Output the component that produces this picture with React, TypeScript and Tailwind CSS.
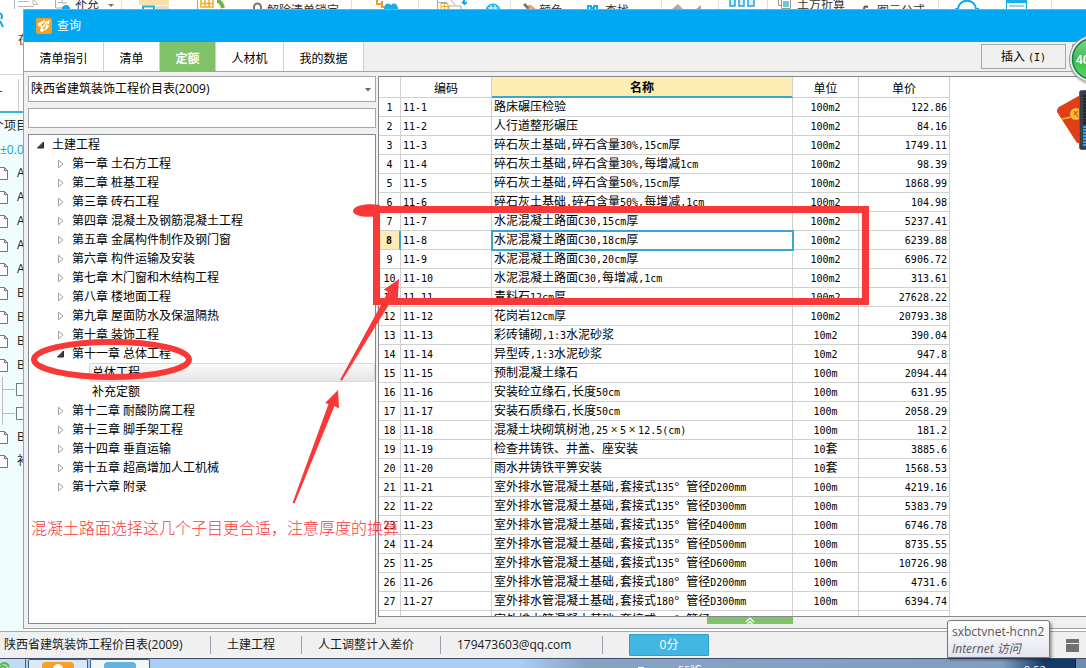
import React, { useState } from "react";

const cjk = "font-['Open_Sans','Noto_Sans_CJK_SC',sans-serif]";

const chapters = [
  "第一章 土石方工程",
  "第二章 桩基工程",
  "第三章 砖石工程",
  "第四章 混凝土及钢筋混凝土工程",
  "第五章 金属构件制作及钢门窗",
  "第六章 构件运输及安装",
  "第七章 木门窗和木结构工程",
  "第八章 楼地面工程",
  "第九章 屋面防水及保温隔热",
  "第十章 装饰工程",
];
const laterChapters = [
  "第十二章 耐酸防腐工程",
  "第十三章 脚手架工程",
  "第十四章 垂直运输",
  "第十五章 超高增加人工机械",
  "第十六章 附录",
];

const rows: [string, string, string][] = [
  ["路床碾压检验", "100m2", "122.86"],
  ["人行道整形碾压", "100m2", "84.16"],
  ["碎石灰土基础,碎石含量30%,15cm厚", "100m2", "1749.11"],
  ["碎石灰土基础,碎石含量30%,每增减1cm", "100m2", "98.39"],
  ["碎石灰土基础,碎石含量50%,15cm厚", "100m2", "1868.99"],
  ["碎石灰土基础,碎石含量50%,每增减,1cm", "100m2", "104.98"],
  ["水泥混凝土路面C30,15cm厚", "100m2", "5237.41"],
  ["水泥混凝土路面C30,18cm厚", "100m2", "6239.88"],
  ["水泥混凝土路面C30,20cm厚", "100m2", "6906.72"],
  ["水泥混凝土路面C30,每增减,1cm", "100m2", "313.61"],
  ["青料石12cm厚", "100m2", "27628.22"],
  ["花岗岩12cm厚", "100m2", "20793.38"],
  ["彩砖铺砌,1:3水泥砂浆", "10m2", "390.04"],
  ["异型砖,1:3水泥砂浆", "10m2", "947.8"],
  ["预制混凝土缘石", "100m", "2094.44"],
  ["安装砼立缘石,长度50cm", "100m", "631.95"],
  ["安装石质缘石,长度50cm", "100m", "2058.29"],
  ["混凝土块砌筑树池,25×5×12.5(cm)", "100m", "181.2"],
  ["检查井铸铁、井盖、座安装", "10套", "3885.6"],
  ["雨水井铸铁平箅安装", "10套", "1568.53"],
  ["室外排水管混凝土基础,套接式135°管径D200mm", "100m", "4219.16"],
  ["室外排水管混凝土基础,套接式135°管径D300mm", "100m", "5383.79"],
  ["室外排水管混凝土基础,套接式135°管径D400mm", "100m", "6746.78"],
  ["室外排水管混凝土基础,套接式135°管径D500mm", "100m", "8735.55"],
  ["室外排水管混凝土基础,套接式135°管径D600mm", "100m", "10726.98"],
  ["室外排水管混凝土基础,套接式180°管径D200mm", "100m", "4731.6"],
  ["室外排水管混凝土基础,套接式180°管径D300mm", "100m", "6394.74"],
  ["室外排水管混凝土基础,套接式180°管径D400mm", "100m", "8019.55"],
];

/* Latin runs are set in a half-width face beside full-width Chinese glyphs. */
function Mixed({ text }: { text: string }) {
  const parts = text.split(/([\x20-\x7e]+|[×°])/).filter(Boolean);
  return (
    <>
      {parts.map((p, i) => {
        if (p === "×" || p === "°")
          return (
            <span key={i} className={p === "×" ? "inline-block w-3 text-center" : "inline-block w-3"}>
              {p}
            </span>
          );
        return /^[\x20-\x7e]/.test(p) ? (
          <span key={i} className="font-['DejaVu_Sans_Mono',monospace] text-[10px]">
            {p}
          </span>
        ) : (
          <span key={i}>{p}</span>
        );
      })}
    </>
  );
}

function Closed() {
  return (
    <svg width="8" height="10" viewBox="0 0 8 10" className="shrink-0">
      <path d="M1.5 1.2 L6 5 L1.5 8.8 Z" fill="#fff" stroke="#a0a0a0" />
    </svg>
  );
}
function Open() {
  return (
    <svg width="8" height="10" viewBox="0 0 8 10" className="shrink-0">
      <path d="M6.5 2 V8 H0.5 Z" fill="#404040" stroke="#262626" />
    </svg>
  );
}

function Node({ text, level, state, selected }: { text: string; level: 0 | 1 | 2; state?: "open" | "closed"; selected?: boolean }) {
  const pad = level === 0 ? "pl-2" : level === 1 ? "pl-7" : "pl-[60px]";
  return (
    <li className={`flex h-[19px] items-center ${pad}`}>
      {state === "open" && <Open />}
      {state === "closed" && <Closed />}
      <span
        className={
          selected
            ? "flex h-[19px] flex-1 items-center rounded-[2px] border border-[#d9d9d9] bg-linear-to-b from-[#fafafa] to-[#e5e5e5] pl-[2px]"
            : level === 2
              ? "pl-[3px]"
              : "pl-[7px]"
        }
      >
        {text}
      </span>
    </li>
  );
}

function FileIcon() {
  return (
    <svg width="8" height="13" viewBox="0 0 8 13" className="shrink-0">
      <path d="M0 0.5 H4.5 L7.5 3.5 V12.5 H0 M4.5 0.5 V3.5 H7.5" fill="#fff" stroke="#777" />
    </svg>
  );
}

function Ribbon() {
  const g = "flex h-[9px] shrink-0 items-start overflow-hidden border-r border-[#e0e0e0]";
  return (
    <div className="flex h-[9px] overflow-hidden text-[12px] leading-[12px] text-[#333]">
      <div className={`${g} w-[122px]`}>
        <svg width="24" height="24" className="ml-[14px] shrink-0">
          <path d="M0.5 0 V23.5 H23 M20 0 L23.5 4 M19 0 V4.5 H24 M4 1.5 H15 M4 6.5 H20" fill="none" stroke="#b5b5b5" />
        </svg>
        <svg width="16" height="9" className="ml-[17px] shrink-0">
          <path d="M0.5 0 V8 H9 M7 0 V3 H12 M3 2.5 H6" fill="none" stroke="#aaa" />
          <path d="M7 9 a4 4 0 0 1 8 0" fill="#18a8e0" />
        </svg>
        <span className="-mt-[2px] ml-1 w-[30px] shrink-0">补充</span>
        <svg width="8" height="9" className="ml-[2px] shrink-0">
          <path d="M1 4 H7 L4 7 Z" fill="#777" />
        </svg>
      </div>
      <div className={`${g} w-[230px]`}>
        <svg width="30" height="9" className="ml-[17px] shrink-0">
          <rect width="30" height="5" fill="#fbe0ae" />
          <path d="M4 9 V6.5 H15 V9" fill="#fff" stroke="#18b0e8" strokeWidth="2" />
          <rect x="17" y="6" width="13" height="3" fill="#ddd" />
        </svg>
        <svg width="30" height="9" className="ml-[28px] shrink-0">
          <path d="M4 0 V7 H16 V0 M4 3.5 H16 M8 0 V7 M12 0 V7" fill="none" stroke="#f0b020" strokeWidth="1.5" />
          <path d="M20 1 C23 1 25 4 26 8" fill="none" stroke="#70b840" strokeWidth="4" />
          <path d="M0.5 0 V9" stroke="#aaa" />
        </svg>
        <svg width="10" height="9" className="ml-[26px] shrink-0">
          <path d="M1 9 V7 a3 3 0 0 1 7 0 V9" fill="none" stroke="#777" strokeWidth="2" />
        </svg>
        <span className="mt-[5px] ml-1 shrink-0">解除清单锁定</span>
      </div>
      <div className={`${g} w-[67px]`}>
        <svg width="25" height="9" className="ml-6 shrink-0">
          <path d="M1 0 V4 H6 M6 1 V7 H10" fill="none" stroke="#f59a23" strokeWidth="2" />
          <path d="M8 9 C8 4 12 2 15 5 C18 2 22 4 22 9 Z" fill="#16b0e8" />
        </svg>
      </div>
      <div className={`${g} w-[92px]`}>
        <svg width="30" height="9" className="ml-[18px] shrink-0">
          <path d="M0.5 0 V9 M0 2.5 H10" stroke="#aaa" />
          <path d="M4 3.5 H11 V9 M4 9 V3 M4 6.5 H12 M7.500 3 V9" fill="none" stroke="#f0b020" />
          <path d="M12 9 V6 H24 V9 M14 0 L18 5" fill="none" stroke="#aaa" />
          <path d="M27 0 V3 M25 2 L27.500 4 L30 2" fill="none" stroke="#16a8e0" strokeWidth="2" />
        </svg>
        <svg width="16" height="9" className="ml-[18px] shrink-0">
          <circle cx="8" cy="11" r="7.500" fill="#20b4ea" />
          <path d="M3 8 H13 M6 5 V9 M10 5 V9" stroke="#fff" />
        </svg>
      </div>
      <div className={`${g} w-[151px]`}>
        <svg width="16" height="9" className="ml-3 shrink-0">
          <path d="M1 4 L6 9" stroke="#777" strokeWidth="3" />
          <path d="M4 5 H8 L13 9 H8 Z" fill="#f0a070" />
        </svg>
        <span className="mt-[5px] shrink-0">颜色</span>
        <svg width="11" height="9" className="ml-6 shrink-0">
          <path d="M1 9 V6 H4 V9 M7 9 V6 H10 V9 M4 8 H7" fill="none" stroke="#16b0e8" strokeWidth="2" />
        </svg>
        <span className="mt-[5px] ml-[7px] shrink-0">查找</span>
      </div>
      <div className={`${g} w-[57px]`}>
        <svg width="40" height="9" className="ml-2 shrink-0">
          <path d="M2 9 L8 4 L13 9 Z M26 9 L31 5 V9 Z" fill="#aaa" />
        </svg>
      </div>
      <div className={`${g} w-[49px]`}>
        <svg width="28" height="9" className="ml-[10px] shrink-0">
          <path d="M1 0 V6 H6 V0 M10 0 V6 H15 V0 M19 0 V6 H25 V0" fill="#d8f0f8" stroke="#20a8d8" strokeWidth="1.5" />
        </svg>
      </div>
      <div className={`${g} w-[171px]`}>
        <svg width="15" height="9" className="ml-[10px] shrink-0">
          <path d="M0.5 0 V5.500 H4 M3.500 0 V8.500 H12.500 V0" fill="none" stroke="#999" />
          <rect x="5" y="1" width="6" height="6" fill="#70c8d8" />
        </svg>
        <span className="ml-1 -mt-px shrink-0">土方折算</span>
        <svg width="6" height="9" className="ml-[18px] shrink-0">
          <path d="M1 9 C1 6 3 6 5 7" fill="none" stroke="#555" strokeWidth="2" />
        </svg>
        <span className="mt-[5px] ml-2 shrink-0">图元公式</span>
      </div>
      <div className={`${g} w-[113px]`}>
        <svg width="24" height="9" className="ml-[16px] shrink-0">
          <path d="M0 9 H3 M21 9 H24 M3 9 C4 -2 20 -2 21 9" fill="none" stroke="#16a8e0" strokeWidth="2" />
        </svg>
        <svg width="24" height="9" className="ml-[26px] shrink-0">
          <rect x="1" width="21" height="3" fill="#18b0e8" />
          <path d="M1.500 0 V9 M21.500 0 V9 M4 6 H19" stroke="#18b0e8" />
        </svg>
      </div>
    </div>
  );
}

function Navigator() {
  const items = ["A", "A", "A", "A", "A", "B", "B", "B", "B", "", "", "B", "补"];
  return (
    <div className="flex min-h-0 w-[124px] flex-1 flex-col overflow-hidden bg-[#f0fdff] text-[12px] text-[#222]">
      <div className="-ml-2 flex h-6 shrink-0 items-center pt-[2px]">个项目</div>
      <div className="flex h-6 shrink-0 items-center pt-[2px] text-[#20a0d0]">±0.00</div>
      <ul>
        {items.map((t, i) =>
          t === "" ? (
            <li key={i} className="ml-[2px] flex h-6 items-center border-l border-[#bbb]">
              <span className="h-px w-3 bg-[#bbb]" />
              <svg width="9" height="13" viewBox="0 0 9 13">
                <path d="M1.500 0.500 H9 M1.500 0 V12.500 H9" fill="none" stroke="#777" />
              </svg>
            </li>
          ) : (
            <li key={i} className="flex h-6 items-center gap-[9px]">
              <FileIcon />
              <span>{t}</span>
            </li>
          )
        )}
      </ul>
    </div>
  );
}

function Tabs({ tab, setTab }: { tab: number; setTab: (n: number) => void }) {
  const tabs = [
    ["清单指引", "w-20"],
    ["清单", "w-14"],
    ["定额", "w-14"],
    ["人材机", "w-[68px]"],
    ["我的数据", "w-20"],
  ];
  return (
    <div className="flex h-[30px] shrink-0 items-stretch border-b border-[#7cc566]">
      {tabs.map(([t, w], i) => (
        <button
          key={t}
          onClick={() => setTab(i)}
          className={`${w} border-r border-[#b5e6a4] pt-1 text-center ${i === tab ? "bg-[#80c269] font-bold text-white" : "bg-white"}`}
        >
          {t}
        </button>
      ))}
      <div className="ml-auto flex gap-[6px] pt-[2px]">
        <button className="h-[25px] w-[85px] border border-[#a6a6a6] bg-[#f0f0f0]">
          插入 <Mixed text="(I)" />
        </button>
        <button aria-label="关闭" className="h-[25px] w-[54px] border border-[#a6a6a6] bg-[#f0f0f0]" />
      </div>
    </div>
  );
}

function PriceTable() {
  const [sel, setSel] = useState(7);
  const line = "border-r border-b border-[#d0d0d0]";
  return (
    <table className="table-fixed border-separate border-spacing-0 text-[12px] leading-[17px]">
      <colgroup>
        <col className="w-[22px]" />
        <col className="w-[91px]" />
        <col className="w-[301px]" />
        <col className="w-[66px]" />
        <col className="w-[91px]" />
      </colgroup>
      <thead>
        <tr className="h-[21px]">
          <th className={`${line} p-0`} />
          <th className={`${line} p-0 pt-[2px] font-normal`}>编码</th>
          <th className="border-r border-b-2 border-r-[#d0d0d0] border-b-[#39a6d4] bg-[#ffecb5] p-0 pt-[2px] font-bold">名称</th>
          <th className={`${line} p-0 pt-[2px] font-normal`}>单位</th>
          <th className={`${line} p-0 pt-[2px] font-normal`}>单价</th>
        </tr>
      </thead>
      <tbody className="leading-4">
        {rows.map(([name, unit, price], i) => (
          <tr key={i} className="h-[19px]" onClick={() => setSel(i)}>
            <td
              className={
                i === sel
                  ? "border-r-2 border-b border-r-[#39a6d4] border-b-[#d0d0d0] bg-[#ffecb5] p-0 text-center font-bold"
                  : `${line} p-0 text-center`
              }
            >
              <Mixed text={String(i + 1)} />
            </td>
            <td className={`${line} p-0 pl-[2px]`}>
              <Mixed text={`11-${i + 1}`} />
            </td>
            <td
              className={
                i === sel
                  ? `${line} p-0 pl-[2px] whitespace-nowrap outline-2 -outline-offset-1 outline-[#39a6d4]`
                  : `${line} p-0 pl-[2px] whitespace-nowrap`
              }
            >
              <Mixed text={name} />
            </td>
            <td className={`${line} p-0 text-center`}>
              <Mixed text={unit} />
            </td>
            <td className={`${line} p-0 pr-[2px] text-right`}>
              <Mixed text={price} />
            </td>
          </tr>
        ))}
      </tbody>
    </table>
  );
}

function QueryDialog() {
  const [tab, setTab] = useState(2);
  return (
    <section className="absolute top-[9px] -right-[41px] bottom-[39px] left-[23px] flex flex-col border border-[#a0a0a0] bg-[#f0f0f0] text-[12px] text-black">
      <header className="flex h-8 shrink-0 items-center gap-[5px] bg-[#00a8f3] pl-3 text-white">
        <svg width="16" height="16" viewBox="0 0 16 16">
          <rect width="16" height="16" rx="2" fill="#f7a024" />
          <path d="M2 5.500 L8 2 L9.500 3 L5 7 L7 7.500 L10 3.500 L14 2 L13 6 L10 7 L13.500 7.500 L11 11 L6 14 L4 13 L5 9 L2 8 Z" fill="#fff" />
          <path d="M8 5.500 L6 8.500 M11 5 L7 11 M9.500 9 L7.500 12" stroke="#f7a024" strokeWidth="1" fill="none" />
        </svg>
        <h1>查询</h1>
      </header>
      <Tabs tab={tab} setTab={setTab} />
      <div className="flex min-h-0 flex-1 gap-[2px] p-1">
        <div className="flex w-[348px] shrink-0 flex-col gap-[6px]">
          <div className="relative flex h-[26px] shrink-0">
            <select aria-label="定额库" className="w-full appearance-none border border-[#a6a6a6] bg-white pl-[2px]">
              <option>陕西省建筑装饰工程价目表(2009)</option>
            </select>
            <svg width="6" height="4" className="pointer-events-none absolute top-3 right-[5px]">
              <path d="M0 0 H6 L3 3.500 Z" fill="#666" />
            </svg>
          </div>
          <input aria-label="搜索" className="h-5 shrink-0 border border-[#a6a6a6] bg-white px-1" />
          <div className="min-h-0 flex-1 overflow-hidden border border-[#828790] bg-white">
            <ul className="leading-[17px]">
              <Node text="土建工程" level={0} state="open" />
              {chapters.map((c) => (
                <Node key={c} text={c} level={1} state="closed" />
              ))}
              <Node text="第十一章 总体工程" level={1} state="open" />
              <Node text="总体工程" level={2} selected />
              <Node text="补充定额" level={2} />
              {laterChapters.map((c) => (
                <Node key={c} text={c} level={1} state="closed" />
              ))}
            </ul>
          </div>
        </div>
        <div className="flex min-w-0 flex-1 flex-col items-center">
          <div className="min-h-0 w-full flex-1 overflow-hidden border border-[#828790] bg-white">
            <PriceTable />
          </div>
          <button aria-label="展开" className="flex h-[7px] w-[86px] shrink-0 justify-center bg-[#80c269]">
            <svg width="12" height="7">
              <path d="M2 5 L6 1 L10 5 M3.500 7 L6 4.500 L8.500 7" fill="none" stroke="#fff" strokeWidth="1.200" />
            </svg>
          </button>
        </div>
      </div>
    </section>
  );
}

function StatusBar() {
  const item = "flex h-[18px] items-center border-r border-[#98a0b0]";
  return (
    <footer className="flex h-7 shrink-0 items-center border-t border-b border-t-[#a8a8a8] border-b-[#3d4b66] bg-[#f0f0f0] text-[12px] text-[#1a1a1a]">
      <span className={`${item} w-[211px] pl-1`}>陕西省建筑装饰工程价目表(2009)</span>
      <span className={`${item} w-[91px] pl-4`}>土建工程</span>
      <span className={`${item} w-[139px] pl-4`}>人工调整计入差价</span>
      <span className={`${item} w-[162px] pl-4`}>179473603@qq.com</span>
      <button className="ml-[26px] h-[22px] w-20 rounded-[1px] border border-[#2d9fcb] bg-[#43b5e3] text-white">0分</button>
      <svg width="13" height="13" className="mr-[7px] ml-auto">
        <path d="M0 0 H13 V4 H0 Z M0 5 H13 V13 H0 Z" fill="#707070" />
      </svg>
    </footer>
  );
}

function Taskbar() {
  return (
    <div className="flex h-[9px] shrink-0 overflow-hidden bg-linear-to-r from-[#a9cdf3] from-48% via-[#87a3c4] via-54% to-[#7f9dc0] text-[11px] text-white">
      <div className="w-[26px] shrink-0 border-r border-[#44607f] bg-[#c3daf2]">
        <svg width="14" height="9">
          <path d="M0 6 C3 3 7 3 9 8 M0 9 C3 6 5 7 6 9" fill="none" stroke="#58b838" strokeWidth="2" />
        </svg>
      </div>
      <div className="ml-[2px] flex w-[60px] shrink-0 items-end justify-center rounded-t-[2px] border-x border-t border-[#44607f] bg-[#dae8f7]">
        <svg width="32" height="6">
          <rect width="32" height="12" rx="4" fill="#f9a020" />
          <circle cx="16" cy="7" r="5" fill="#fff" />
        </svg>
      </div>
      <div className="ml-[2px] flex w-[60px] shrink-0 items-end justify-center rounded-t-[2px] border-x border-t border-[#44607f] bg-[#f2f6fb]">
        <svg width="32" height="6">
          <rect width="32" height="12" rx="4" fill="#62b4de" />
        </svg>
      </div>
      <span className="mt-2 ml-[488px] h-[2px] w-[6px] shrink-0 bg-white" />
      <span className="mt-1 ml-[34px] shrink-0 leading-[14px]">55℃</span>
      <div className="ml-auto flex w-[84px] shrink-0 bg-linear-to-r from-transparent to-[#123a6a] to-50%">
        <span className="mt-1 ml-[22px] leading-[14px]">9:52</span>
        <span className="ml-auto w-[11px] border-l border-[#0d2340] bg-[#6f8bb0]" />
      </div>
    </div>
  );
}

export default function App() {
  return (
    <main className={`${cjk} relative flex h-screen flex-col overflow-hidden bg-white`}>
      <Ribbon />
      <div className="flex h-[66px] shrink-0 border-b border-[#d8d8d8] text-[12px] text-[#333]">
        <svg width="6" height="22" className="shrink-0">
          <path d="M0 4 a4 4 0 0 1 1 6 M0 12 L3 18" fill="none" stroke="#18a8e0" strokeWidth="2" />
        </svg>
        <span className="mt-[22px] ml-3">在</span>
      </div>
      <div className="flex h-[38px] shrink-0 items-start border-b-2 border-[#35b0e0]">
        <span className="mt-4 h-px w-[2px] bg-[#333]" />
        <span className="mt-1 ml-4 h-8 w-px bg-[#ccc]" />
      </div>
      <Navigator />
      <StatusBar />
      <Taskbar />

      <QueryDialog />

      <p className="absolute top-[516px] left-[31px] text-[16px] leading-6 font-light whitespace-nowrap text-[#fb3838]">
        混凝土路面选择这几个子目更合适，注意厚度的换算
      </p>
      <svg width="1086" height="668" className="pointer-events-none absolute top-0 left-0">
        <g fill="none" stroke="#fb3838">
          <ellipse cx="111.500" cy="359.500" rx="77.500" ry="17.500" strokeWidth="6" />
          <rect x="376.500" y="209.500" width="489" height="92" strokeWidth="7" />
        </g>
        <g fill="#fb3838">
          <path d="M380 205 C366 203 353 206 353 211 C353 216 366 218 378 216 Z" />
          <path d="M399 279 L384 289.500 L388 292 L340 380 L342 380.500 L393 298 L397.500 303 Z" />
          <path d="M338 390 L325 403 L328.500 404 L292.500 503 L294.500 503.500 L334.500 406 L339 408.500 Z" />
        </g>
      </svg>

      <svg width="44" height="120" viewBox="0 0 44 120" className="pointer-events-none absolute top-[34px] right-0">
        <defs>
          <linearGradient id="ball" x1="0" y1="0" x2="0" y2="1">
            <stop offset="0" stopColor="#86d888" />
            <stop offset="0.500" stopColor="#3cbc50" />
            <stop offset="1" stopColor="#56dc60" />
          </linearGradient>
        </defs>
        <circle cx="51" cy="27" r="24" fill="#777" opacity="0.350" />
        <circle cx="51" cy="25" r="23.500" fill="#eee" stroke="#999" />
        <circle cx="51" cy="25" r="20.500" fill="url(#ball)" stroke="#148048" strokeWidth="1.500" />
        <text x="34" y="30" fontSize="12" fontWeight="700" fill="#fff" fontFamily="Liberation Sans">
          40
        </text>
        <path d="M17 73 L40 60 V109 H35 L15 78 Q15 74 17 73 Z" fill="#e04018" />
        <path d="M20 85 L44 80" stroke="#f5b030" strokeWidth="1.500" />
        <circle cx="34" cy="80" r="6" fill="#f8bc38" />
        <path d="M32 77 L36 83 M36 77 L32 81" stroke="#d06018" strokeWidth="1.200" />
        <rect x="37.500" y="56.500" width="12" height="59" rx="2" fill="#38404c" stroke="#59616d" />
        <path d="M42.500 61 V91" stroke="#20262e" strokeWidth="3" strokeDasharray="2 1" />
        <path d="M42.500 92 V112" stroke="#28a8f0" strokeWidth="3" strokeDasharray="2 1" />
      </svg>

      <div role="tooltip" className="absolute right-[36px] bottom-[10px] w-[103px] rounded-t-[3px] border border-[#767676] bg-linear-to-b from-white to-[#e4e5f0] px-1 pt-[2px] text-[12px] leading-[17px] whitespace-nowrap text-[#575757] shadow-[2px_2px_3px_rgba(0,0,0,0.35)]">
        <p>sxbctvnet-hcnn2</p>
        <p className="italic">Internet 访问</p>
      </div>
    </main>
  );
}
